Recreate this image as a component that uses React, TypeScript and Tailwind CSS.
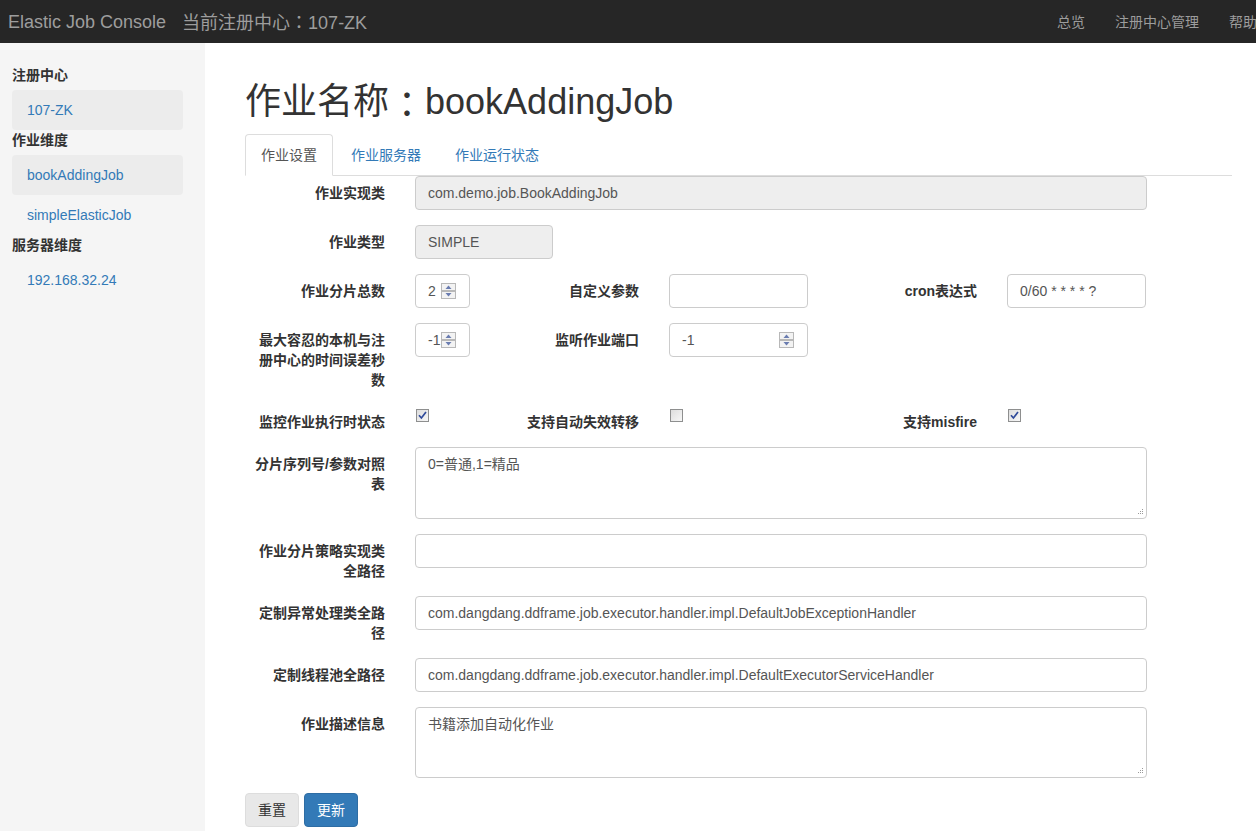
import React from "react";

const Spinner = () => (
  <svg width="15" height="16" viewBox="0 0 15 16" className="absolute right-[13px] top-[8px]">
    <rect x="0.5" y="0.5" width="14" height="7" fill="#f3f3f3" stroke="#b8b8b8" />
    <rect x="0.5" y="8.5" width="14" height="7" fill="#f3f3f3" stroke="#b8b8b8" />
    <polygon points="4.5,6 10.5,6 7.5,2.5" fill="#6a7cb0" />
    <polygon points="4.5,10 10.5,10 7.5,13.5" fill="#6a7cb0" />
  </svg>
);

const Check = ({ checked }: { checked: boolean }) => (
  <svg width="13" height="13" viewBox="0 0 13 13">
    <defs>
      <linearGradient id="cbg" x1="0" y1="0" x2="1" y2="1">
        <stop offset="0" stopColor="#dcdcdc" />
        <stop offset="1" stopColor="#f8f8f8" />
      </linearGradient>
    </defs>
    <rect x="0.5" y="0.5" width="12" height="12" fill="url(#cbg)" stroke="#8e8f8f" />
    {checked && <path d="M3 6.2 L5.4 9 L10 3" stroke="#2f4a9a" strokeWidth="1.7" fill="none" />}
  </svg>
);

const Grip = () => (
  <svg width="8" height="8" viewBox="0 0 8 8" className="absolute right-[2px] bottom-[2px]">
    <rect x="6" y="1" width="1" height="1" fill="#999" />
    <rect x="6" y="3" width="1" height="1" fill="#999" />
    <rect x="6" y="5" width="1" height="1" fill="#999" />
    <rect x="4" y="3" width="1" height="1" fill="#999" />
    <rect x="4" y="5" width="1" height="1" fill="#999" />
    <rect x="2" y="5" width="1" height="1" fill="#999" />
  </svg>
);

const Label = ({ w, children }: { w: string; children: React.ReactNode }) => (
  <div className={`${w} shrink-0 pl-[16px] pr-[15px] pt-[7px] text-right font-bold leading-5 text-[#333]`}>{children}</div>
);

const Input = ({ children, disabled, spin }: { children?: React.ReactNode; disabled?: boolean; spin?: boolean }) => (
  <div
    className={`relative h-[34px] border border-[#ccc] rounded-[4px] px-3 py-[6px] leading-5 text-[#555] whitespace-nowrap ${
      disabled ? "bg-[#eee]" : "bg-white"
    }`}
  >
    {children}
    {spin && <Spinner />}
  </div>
);

const Area = ({ h, children }: { h: string; children?: React.ReactNode }) => (
  <div className={`relative ${h} border border-[#ccc] rounded-[4px] px-3 py-[6px] leading-5 text-[#555] bg-white`}>
    {children}
    <Grip />
  </div>
);

const Col = ({ w, children, className = "" }: { w: string; children?: React.ReactNode; className?: string }) => (
  <div className={`${w} shrink-0 px-[15px] ${className}`}>{children}</div>
);

const Row = ({ children }: { children: React.ReactNode }) => (
  <div className="-ml-[15px] mb-[15px] flex items-start">{children}</div>
);

const Colon = () => <span className="font-['Noto_Sans_CJK_TC',sans-serif]">：</span>;

export default function App() {
  return (
    <div className="h-[831px] w-[1256px] overflow-hidden bg-white text-[14px] text-[#333] font-['Liberation_Sans','Noto_Sans_CJK_SC',sans-serif]">
      {/* navbar */}
      <div className="flex h-[43px] items-center overflow-hidden bg-[#262626]">
        <div className="flex h-5 items-center pl-[8px] text-[18px] leading-5 text-[#9d9d9d] whitespace-nowrap">
          Elastic Job Console<span className="ml-[16px]">当前注册中心<Colon />107-ZK</span>
        </div>
        <div className="ml-auto -mr-[16px] flex whitespace-nowrap text-[14px] leading-5 text-[#9d9d9d]">
          <div className="px-[15px]">总览</div>
          <div className="px-[15px]">注册中心管理</div>
          <div className="px-[15px]">帮助</div>
        </div>
      </div>

      <div className="flex h-[788px]">
        {/* sidebar */}
        <div className="w-[205px] shrink-0 bg-[#f5f5f5] pl-[12px] pr-[22px] pt-[22px]">
          <div className="mb-[5px] h-5 font-bold leading-5">注册中心</div>
          <div className="h-10 rounded-[4px] bg-[#ececec] px-[15px] py-[10px] leading-5 text-[#337ab7]">107-ZK</div>
          <div className="mb-[5px] h-5 font-bold leading-5">作业维度</div>
          <div className="h-10 rounded-[4px] bg-[#ececec] px-[15px] py-[10px] leading-5 text-[#337ab7]">bookAddingJob</div>
          <div className="h-10 px-[15px] py-[10px] leading-5 text-[#337ab7]">simpleElasticJob</div>
          <div className="mb-[5px] h-5 font-bold leading-5">服务器维度</div>
          <div className="h-10 px-[15px] py-[10px] leading-5 text-[#337ab7]">192.168.32.24</div>
        </div>

        {/* main */}
        <div className="flex-1 pl-[40px] pr-[24px]">
          <h1 className="mt-[39px] mb-[12px] flex h-[40px] items-center text-[36px] font-normal leading-[40px] text-[#333] whitespace-nowrap">
            作业名称<Colon />bookAddingJob
          </h1>

          <div className="flex h-[42px] border-b border-[#ddd]">
            <div className="mr-[2px] -mb-px rounded-t-[4px] border border-[#ddd] border-b-white bg-white px-[15px] py-[10px] leading-5 text-[#555]">
              作业设置
            </div>
            <div className="mr-[2px] border border-transparent px-[15px] py-[10px] leading-5 text-[#337ab7]">作业服务器</div>
            <div className="mr-[2px] border border-transparent px-[15px] py-[10px] leading-5 text-[#337ab7]">作业运行状态</div>
          </div>

          <div>
            <Row>
              <Label w="w-[170px]">作业实现类</Label>
              <Col w="w-[762px]">
                <Input disabled>com.demo.job.BookAddingJob</Input>
              </Col>
            </Row>
            <Row>
              <Label w="w-[170px]">作业类型</Label>
              <Col w="w-[168px]">
                <Input disabled>SIMPLE</Input>
              </Col>
            </Row>
            <Row>
              <Label w="w-[170px]">作业分片总数</Label>
              <Col w="w-[85px]">
                <Input spin>2</Input>
              </Col>
              <Label w="w-[169px]">自定义参数</Label>
              <Col w="w-[169px]">
                <Input />
              </Col>
              <Label w="w-[169px]">cron表达式</Label>
              <Col w="w-[169px]">
                <Input>0/60 * * * * ?</Input>
              </Col>
            </Row>
            <Row>
              <Label w="w-[170px]">最大容忍的本机与注册中心的时间误差秒数</Label>
              <Col w="w-[85px]">
                <Input spin>-1</Input>
              </Col>
              <Label w="w-[169px]">监听作业端口</Label>
              <Col w="w-[169px]">
                <Input spin>-1</Input>
              </Col>
            </Row>
            <Row>
              <Label w="w-[170px]">监控作业执行时状态</Label>
              <Col w="w-[85px]" className="pt-[4px] pl-[16px]">
                <Check checked />
              </Col>
              <Label w="w-[169px]">支持自动失效转移</Label>
              <Col w="w-[169px]" className="pt-[4px] pl-[16px]">
                <Check checked={false} />
              </Col>
              <Label w="w-[169px]">支持misfire</Label>
              <Col w="w-[169px]" className="pt-[4px] pl-[16px]">
                <Check checked />
              </Col>
            </Row>
            <Row>
              <Label w="w-[170px]">分片序列号/参数对照表</Label>
              <Col w="w-[762px]">
                <Area h="h-[72px]">0=普通,1=精品</Area>
              </Col>
            </Row>
            <Row>
              <Label w="w-[170px]">作业分片策略实现类全路径</Label>
              <Col w="w-[762px]">
                <Input />
              </Col>
            </Row>
            <Row>
              <Label w="w-[170px]">定制异常处理类全路径</Label>
              <Col w="w-[762px]">
                <Input>com.dangdang.ddframe.job.executor.handler.impl.DefaultJobExceptionHandler</Input>
              </Col>
            </Row>
            <Row>
              <Label w="w-[170px]">定制线程池全路径</Label>
              <Col w="w-[762px]">
                <Input>com.dangdang.ddframe.job.executor.handler.impl.DefaultExecutorServiceHandler</Input>
              </Col>
            </Row>
            <Row>
              <Label w="w-[170px]">作业描述信息</Label>
              <Col w="w-[762px]">
                <Area h="h-[71px]">书籍添加自动化作业</Area>
              </Col>
            </Row>
            <div className="flex gap-[5px]">
              <div className="h-[34px] rounded-[4px] border border-[#ddd] bg-[#e8e8e8] px-3 py-[6px] leading-5 text-[#333]">重置</div>
              <div className="h-[34px] rounded-[4px] border border-[#2e6da4] bg-[#337ab7] px-3 py-[6px] leading-5 text-white">更新</div>
            </div>
          </div>
        </div>
      </div>
    </div>
  );
}
